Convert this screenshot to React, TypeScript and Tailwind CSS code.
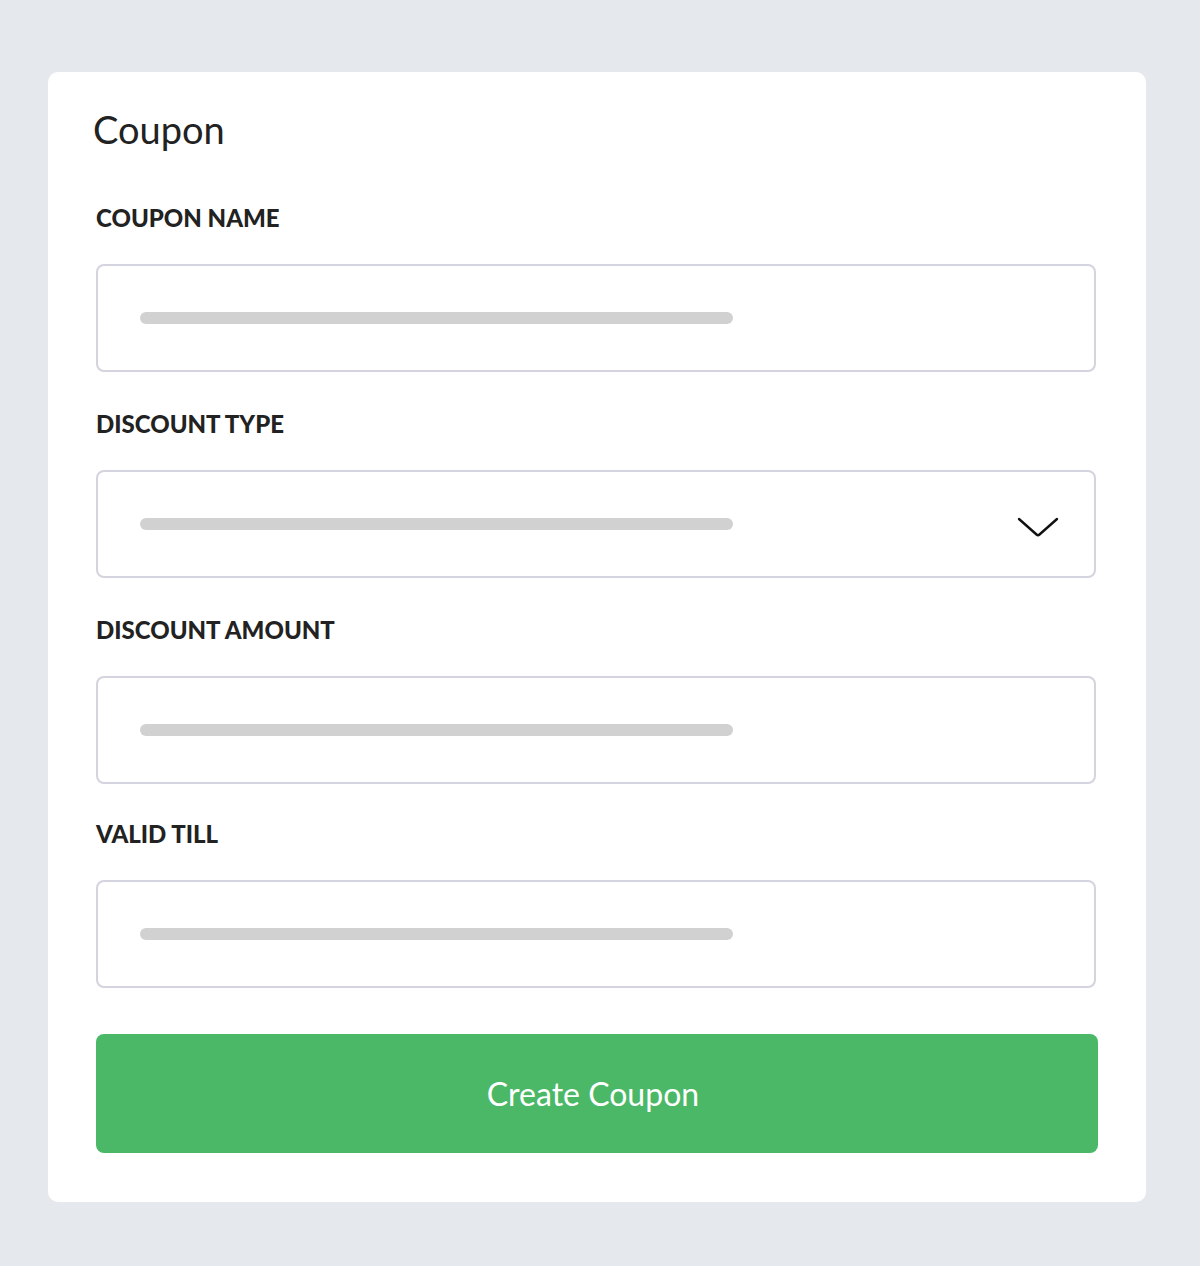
const fields = [
    { label: "COUPON NAME", select: false },
    { label: "DISCOUNT TYPE", select: true },
    { label: "DISCOUNT AMOUNT", select: false },
    { label: "VALID TILL", select: false },
];

const Chevron = () => (
    <svg width="44" height="24" viewBox="0 0 44 24" fill="none">
        <path
            d="M3 4 L20.5 19.5 Q22 20.8 23.5 19.5 L41 4"
            stroke="#111"
            strokeWidth="2.4"
            strokeLinecap="round"
            strokeLinejoin="round"
        />
    </svg>
);

const Field = ({ label, select }: { label: string; select: boolean }) => {
    return (
        <div className="last:-mt-[2px]">
            <div className="text-[24px] leading-[24px] font-black text-[#222]">
                {label}
            </div>
            <div className="mt-[34px] w-[1000px] h-[108px] border-2 border-[#d3d4de] rounded-[8px] flex items-center pl-[42px] pr-[34px]">
                <div className="w-[593px] h-[12px] rounded-full bg-[#d1d1d1]" />
                {select && (
                    <div className="ml-auto mt-[6px]">
                        <Chevron />
                    </div>
                )}
            </div>
        </div>
    );
};

export default function App() {
    return (
        <div
            className="min-h-[1266px] bg-[#e5e8ec] pt-[72px] pl-[48px]"
            style={{ fontFamily: "Lato, 'Open Sans', sans-serif" }}
        >
            <div className="w-[1098px] h-[1130px] bg-white rounded-[10px] pt-[38px] pl-[48px] pr-[48px]">
                <div className="text-[38px] leading-[38px] text-[#222] font-normal -ml-[3px]">Coupon</div>
                <div className="mt-[58px] flex flex-col gap-[40px]">
                    {fields.map((f) => (
                        <Field key={f.label} label={f.label} select={f.select} />
                    ))}
                </div>
                <button className="mt-[46px] w-[1002px] h-[119px] rounded-[8px] bg-[#4ab866] text-white text-[32px] leading-[32px] flex items-center justify-center pr-[8px]">
                    Create Coupon
                </button>
            </div>
        </div>
    );
}
